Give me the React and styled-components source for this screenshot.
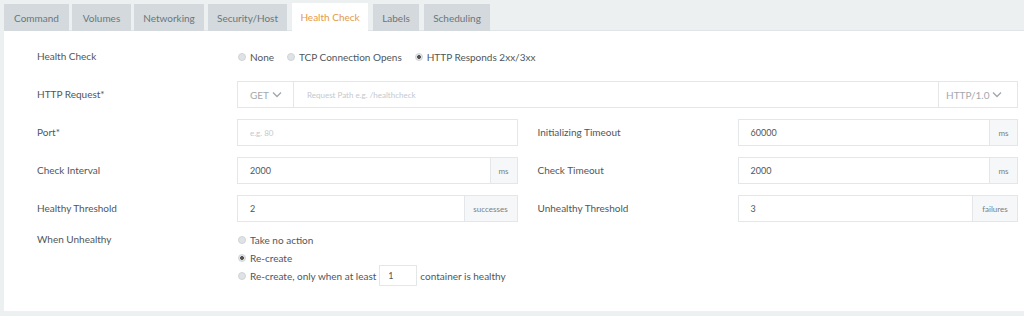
import styled, { createGlobalStyle } from "styled-components";

const GlobalStyle = createGlobalStyle`
  body {
    margin: 0;
    background: #ecf0f1;
    font-family: Lato, "Open Sans", sans-serif;
    color: #555b5f;
  }
`;

const Page = styled.div`
  width: 1024px;
  height: 316px;
  padding: 3px 0 0 4px;
  box-sizing: border-box;
`;

const Tabs = styled.div`
  display: flex;
  align-items: flex-end;
  height: 28px;
`;

const Tab = styled.div`
  width: ${(p) => p.$w}px;
  height: ${(p) => (p.$active ? "28px" : "27px")};
  display: flex;
  align-items: center;
  justify-content: center;
  margin-right: ${(p) => p.$gap}px;
  font-size: 10px;
  background: ${(p) => (p.$active ? "#ffffff" : "#d3d9dc")};
  color: ${(p) => (p.$active ? "#e39a4b" : "#6c767b")};
  box-sizing: border-box;
  position: relative;
  z-index: 1;
`;

const Panel = styled.div`
  background: #ffffff;
  border-top: 1px solid #e1e5e7;
  margin-top: -1px;
  padding: 12px 6px 29px 33px;
  display: grid;
  grid-template-columns: 200px 1fr 220px 1fr;
  row-gap: 11px;
  align-items: center;
`;

const Label = styled.div`
  font-size: 10px;
  color: #4f565a;
  padding-left: ${(p) => (p.$second ? "20px" : "0")};
  align-self: ${(p) => (p.$top ? "start" : "center")};
  line-height: 13px;
`;

const Wide = styled.div`
  grid-column: 2 / -1;
`;

const RadioRow = styled.div`
  display: flex;
  align-items: center;
  gap: 12px;
  height: 27px;
`;

const RadioStack = styled.div`
  display: flex;
  flex-direction: column;
  gap: 5px;
`;

const Option = styled.label`
  display: flex;
  align-items: center;
  gap: 4px;
  font-size: 10px;
  color: #4f565a;
  height: 13px;
`;

const Dot = styled.span`
  width: 8px;
  height: 8px;
  border-radius: 50%;
  background: ${(p) =>
    p.$on
      ? "radial-gradient(circle, #555 0 1.6px, #e3e6e8 2.2px)"
      : "#e0e3e5"};
  border: 1px solid #cfd4d7;
  box-sizing: border-box;
  margin-left: 1px;
  flex: none;
`;

const Inline = styled.span`
  display: flex;
  align-items: center;
  white-space: pre;
`;

const Group = styled.div`
  display: flex;
  height: 27px;
  border: 1px solid #e4e7e9;
  box-sizing: border-box;
  background: #fff;
`;

const Field = styled.div`
  flex: 1;
  display: flex;
  align-items: center;
  padding-left: ${(p) => p.$pad || 12}px;
  font-size: ${(p) => (p.$hint ? "8px" : "9px")};
  color: ${(p) => (p.$hint ? "#c4c9cc" : "#50575b")};
`;

const Addon = styled.div`
  display: flex;
  align-items: center;
  justify-content: center;
  width: ${(p) => p.$w}px;
  background: #f6f7f8;
  border-left: 1px solid #e4e7e9;
  font-size: 8px;
  color: #767e82;
`;

const Select = styled.div`
  display: flex;
  align-items: center;
  gap: 3px;
  width: ${(p) => p.$w}px;
  padding-left: ${(p) => p.$pad}px;
  box-sizing: border-box;
  font-size: 10px;
  color: #a3a9ad;
  border-${(p) => p.$side}: 1px solid #e4e7e9;
`;

const Mini = styled.span`
  display: inline-flex;
  align-items: center;
  width: 38px;
  height: 21px;
  margin: 0 3px;
  padding-left: 8px;
  box-sizing: border-box;
  border: 1px solid #e4e7e9;
  font-size: 9px;
  color: #50575b;
`;

const Chevron = () => (
  <svg width="10" height="7" viewBox="0 0 10 7">
    <path d="M1 1.5l4 4 4-4" fill="none" stroke="#a3a9ad" strokeWidth="1.4" />
  </svg>
);

const tabs = [
  ["Command", 65, 3],
  ["Volumes", 59, 3],
  ["Networking", 70, 4],
  ["Security/Host", 79, 5],
  ["Health Check", 76, 5],
  ["Labels", 46, 5],
  ["Scheduling", 66, 0],
];

function Input({ value, hint, unit, unitW }) {
  return (
    <Group>
      <Field $hint={!!hint}>{value || hint}</Field>
      {unit && <Addon $w={unitW}>{unit}</Addon>}
    </Group>
  );
}

export default function App() {
  return (
    <Page>
      <GlobalStyle />
      <Tabs>
        {tabs.map(([name, w, gap]) => (
          <Tab key={name} $active={name === "Health Check"} $w={w} $gap={gap}>
            {name}
          </Tab>
        ))}
      </Tabs>
      <Panel>
        <Label>Health Check</Label>
        <Wide>
          <RadioRow>
            <Option>
              <Dot /> None
            </Option>
            <Option>
              <Dot /> TCP Connection Opens
            </Option>
            <Option>
              <Dot $on /> HTTP Responds 2xx/3xx
            </Option>
          </RadioRow>
        </Wide>

        <Label>HTTP Request*</Label>
        <Wide>
          <Group>
            <Select $w={56} $pad={12} $side="right">
              GET <Chevron />
            </Select>
            <Field $hint $pad={13}>
              Request Path e.g. /healthcheck
            </Field>
            <Select $w={79} $pad={7} $side="left">
              HTTP/1.0 <Chevron />
            </Select>
          </Group>
        </Wide>

        <Label>Port*</Label>
        <Input hint="e.g. 80" />
        <Label $second>Initializing Timeout</Label>
        <Input value="60000" unit="ms" unitW={27} />

        <Label>Check Interval</Label>
        <Input value="2000" unit="ms" unitW={26} />
        <Label $second>Check Timeout</Label>
        <Input value="2000" unit="ms" unitW={27} />

        <Label>Healthy Threshold</Label>
        <Input value="2" unit="successes" unitW={52} />
        <Label $second>Unhealthy Threshold</Label>
        <Input value="3" unit="failures" unitW={44} />

        <Label $top>When Unhealthy</Label>
        <Wide>
          <RadioStack>
            <Option>
              <Dot /> Take no action
            </Option>
            <Option>
              <Dot $on /> Re-create
            </Option>
            <Option>
              <Dot />
              <Inline>
                Re-create, only when at least<Mini>1</Mini>container is healthy
              </Inline>
            </Option>
          </RadioStack>
        </Wide>
      </Panel>
    </Page>
  );
}
